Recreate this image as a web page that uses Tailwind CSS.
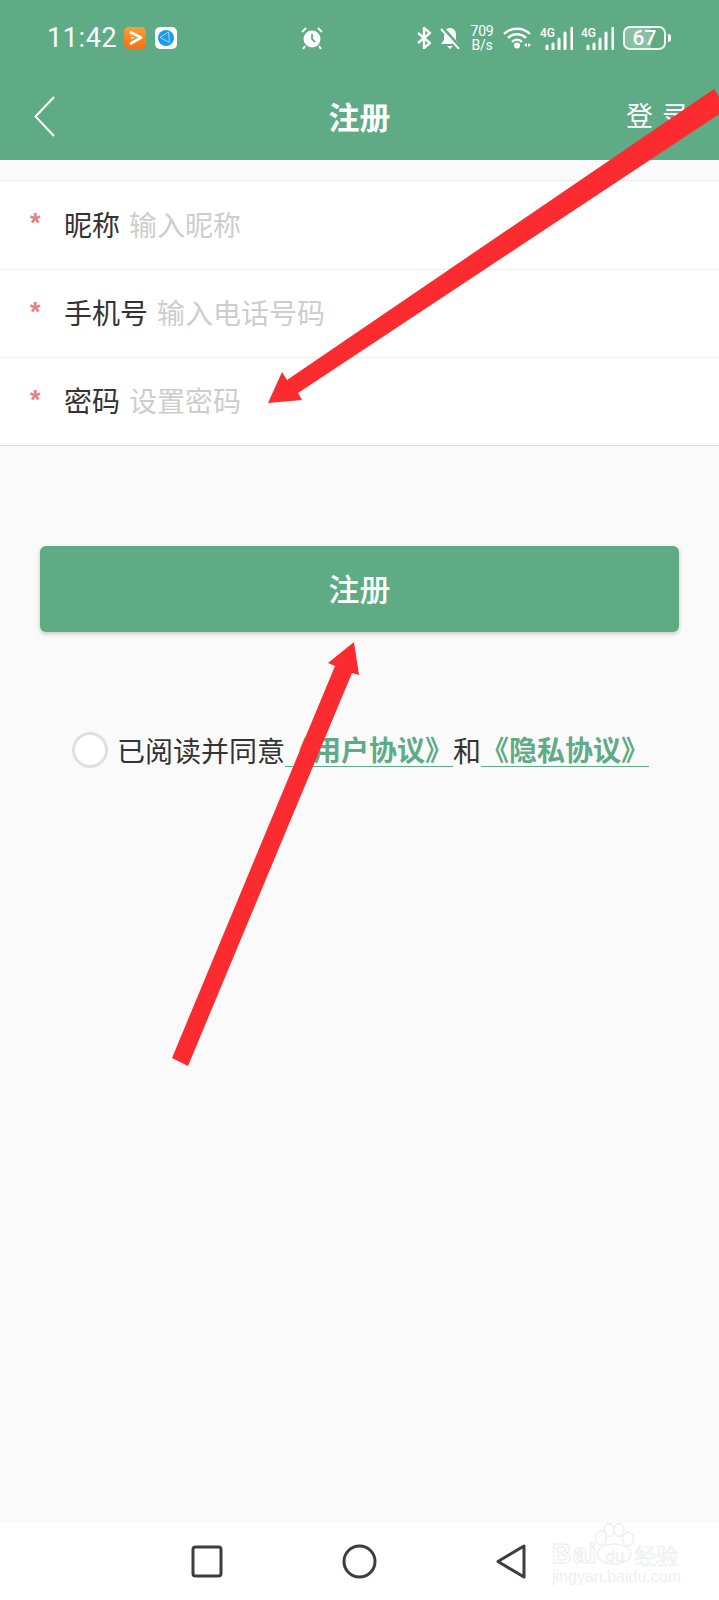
<!DOCTYPE html>
<html lang="zh-CN">
<head>
  <meta charset="UTF-8" />
  <meta name="viewport" content="width=device-width, initial-scale=1.0" />
  <title>注册</title>
  <script src="https://cdn.jsdelivr.net/npm/@tailwindcss/browser@4"></script>
</head>
<body class="bg-[#fafafa] font-['Noto_Sans_CJK_SC','Noto_Sans',sans-serif]">
  <div class="relative w-[719px] h-[1600px] overflow-hidden flex flex-col">

    <!-- header -->
    <header class="h-[160px] bg-[#5fab86] text-white flex flex-col shrink-0">
      <div class="h-[76px] pl-[47px] flex items-center font-['Roboto',sans-serif]">
        <span class="w-[72px] text-[27px] leading-none tracking-[0.6px]">11:42</span>
        <svg class="ml-[5px]" width="22" height="22" viewBox="0 0 22 22">
          <defs>
            <linearGradient id="orange" x1="0" y1="0" x2="0" y2="1">
              <stop offset="0" stop-color="#f7a035" />
              <stop offset="1" stop-color="#f4700f" />
            </linearGradient>
          </defs>
          <rect width="22" height="22" rx="5" fill="url(#orange)" />
          <path d="M6 5l11 5.500L6 17" fill="none" stroke="#fff" stroke-width="2.800" stroke-linejoin="round" />
          <path d="M7 9.500l4 1.200-4 1.500z" fill="#fff" />
        </svg>
        <svg class="ml-[9px]" width="22" height="22" viewBox="0 0 22 22">
          <rect width="22" height="22" rx="5" fill="#fff" />
          <circle cx="11" cy="11" r="8" fill="#1c9be8" />
          <path d="M5 10.500l8.500-5.500 1 10.500z" fill="none" stroke="#bfe3ff" stroke-width="0.800" />
        </svg>
        <svg class="ml-[123px]" width="24" height="24" viewBox="0 0 24 24">
          <circle cx="12" cy="13" r="8.500" fill="#fff" />
          <path d="M12 8v5l3 3" fill="none" stroke="#5fab86" stroke-width="1.800" />
          <path d="M2 6l4-4M22 6l-4-4M5 20l-2 3M19 20l2 3" stroke="#fff" stroke-width="2" />
        </svg>
        <svg class="ml-[93px]" width="14" height="22" viewBox="0 0 14 22">
          <path d="M1 6l12 10-6 5V1l6 5L1 16" fill="none" stroke="#fff" stroke-width="2.400" />
        </svg>
        <svg class="ml-[9px]" width="20" height="22" viewBox="0 0 20 22">
          <path d="M10 1c4 0 6 3 6 7v5l3 4H1l3-4V8c0-4 2-7 6-7z" fill="#fff" />
          <path d="M7 19h6l-3 3z" fill="#fff" />
          <path d="M1 0l18 20" stroke="#5fab86" stroke-width="4.500" />
          <path d="M1 2l18 20" stroke="#fff" stroke-width="2" />
        </svg>
        <div class="ml-[10px] w-[24px] text-[14px] leading-[14px] text-center tracking-[-0.2px]">709<br />B/s</div>
        <svg class="ml-[9px]" width="29" height="22" viewBox="0 0 29 22">
          <path d="M1 7c7-7 19-7 26 0M5 11c5-5 13-5 18 0M9 15c3-3 7-3 10 0" fill="none" stroke="#fff" stroke-width="2.400" />
          <circle cx="14" cy="18.500" r="3" fill="#fff" />
          <path d="M21 18l3-2v4zM28 18l-3-2v4z" fill="#fff" />
        </svg>
        <div class="ml-[8px] w-[33px] h-[23px] relative">
          <span class="absolute left-0 top-0 text-[12px] leading-none font-medium">4G</span>
          <svg class="absolute left-0 top-0" width="33" height="23" viewBox="0 0 33 23">
            <path d="M7 19v3M13 17v5M19 12v10M25 6v16M32 1v21" stroke="#fff" stroke-width="3" stroke-linecap="round" />
          </svg>
        </div>
        <div class="ml-[8px] w-[33px] h-[23px] relative">
          <span class="absolute left-0 top-0 text-[12px] leading-none font-medium">4G</span>
          <svg class="absolute left-0 top-0" width="33" height="23" viewBox="0 0 33 23">
            <path d="M7 19v3M13 17v5M19 12v10M25 6v16M32 1v21" stroke="#fff" stroke-width="3" stroke-linecap="round" />
          </svg>
        </div>
        <div class="ml-[9px] relative w-[43px] h-[24px] rounded-[7px] border-2 border-white/90 flex items-center justify-center overflow-hidden">
          <div class="absolute left-0 top-0 bottom-0 w-[67%] bg-white/25"></div>
          <span class="relative text-[21px] leading-none font-medium">67</span>
        </div>
        <div class="ml-[2px] w-[3px] h-[8px] rounded-r bg-white"></div>
      </div>
      <div class="relative flex-1 flex items-center justify-center">
        <svg class="absolute left-[34px] top-[20px]" width="21" height="41" viewBox="0 0 21 41">
          <path d="M20 1L1.500 20.500 20 40" fill="none" stroke="#fff" stroke-width="2" />
        </svg>
        <h1 class="text-[31px] leading-none font-bold relative top-[-3px]">注册</h1>
        <span class="absolute left-[626px] top-[25px] text-[27px] leading-none tracking-[9px] whitespace-nowrap">登录</span>
      </div>
    </header>

    <!-- main -->
    <main class="flex-1 flex flex-col pt-[20px]">
      <section class="bg-white border-t border-b border-t-[#ebebeb] border-b-[#dcdcdc] text-[28px] leading-none">
        <div class="h-[88.500px] pl-[30px] pb-[2px] flex items-center border-b border-[#efefef]">
          <span class="w-[34px] text-[#e58080] text-[27px] leading-none font-bold font-['Liberation_Sans',sans-serif]">*</span>
          <span class="text-[#333]">昵称</span>
          <span class="ml-[9px] text-[#cdcdcd]">输入昵称</span>
        </div>
        <div class="h-[88.500px] pl-[30px] pb-[2px] flex items-center border-b border-[#efefef]">
          <span class="w-[34px] text-[#e58080] text-[27px] leading-none font-bold font-['Liberation_Sans',sans-serif]">*</span>
          <span class="text-[#333]">手机号</span>
          <span class="ml-[9px] text-[#cdcdcd]">输入电话号码</span>
        </div>
        <div class="h-[86.500px] pl-[30px] pb-[2px] flex items-center">
          <span class="w-[34px] text-[#e58080] text-[27px] leading-none font-bold font-['Liberation_Sans',sans-serif]">*</span>
          <span class="text-[#333]">密码</span>
          <span class="ml-[9px] text-[#cdcdcd]">设置密码</span>
        </div>
      </section>

      <button class="mt-[100px] mx-[40px] h-[86px] rounded-[6px] bg-[#5fab86] text-white text-[31px] font-medium shadow-[0_2px_5px_rgba(0,0,0,0.2)]">注册</button>

      <div class="mt-[93px] pl-[72px] h-[50px] flex items-center text-[28px] leading-none text-[#333]">
        <span class="w-[36px] h-[36px] rounded-full border-[3.500px] border-[#e0e0e0] bg-white"></span>
        <span class="ml-[9px]">已阅读并同意</span>
        <a class="h-[35px] flex items-center border-b border-[#5fab86] text-[#5fab86] font-bold">《用户协议》</a>
        <span>和</span>
        <a class="h-[35px] flex items-center border-b border-[#5fab86] text-[#5fab86] font-bold">《隐私协议》</a>
      </div>
    </main>

    <!-- android nav -->
    <nav class="relative h-[77px] bg-white shrink-0">
      <svg class="absolute left-0 top-0" width="719" height="77" viewBox="0 1523 719 77">
        <rect x="193" y="1547" width="28" height="29" rx="2.500" fill="none" stroke="#3d3d3d" stroke-width="3" />
        <circle cx="359.500" cy="1561.500" r="15.500" fill="none" stroke="#3d3d3d" stroke-width="3" />
        <path d="M524 1546v31l-26-15.500z" fill="none" stroke="#3d3d3d" stroke-width="3" stroke-linejoin="round" />
      </svg>
      <!-- baidu watermark -->
      <svg class="absolute left-[592px] top-[0px]" width="44" height="42" viewBox="0 0 44 42" fill="white" stroke="#eeeeee" stroke-width="1.300">
        <ellipse cx="9" cy="15" rx="5.500" ry="7" />
        <ellipse cx="17" cy="7" rx="5" ry="6.500" />
        <ellipse cx="27" cy="7" rx="5" ry="6.500" />
        <ellipse cx="36" cy="16" rx="5.500" ry="7" />
        <ellipse cx="22" cy="31" rx="17" ry="10" />
      </svg>
      <div class="absolute left-[552px] top-[20px] flex items-center h-[22px] leading-none font-['Liberation_Sans',sans-serif] text-white [-webkit-text-stroke:1px_#ebebeb]">
        <span class="w-[44px] text-[27px] font-bold tracking-[1px]">Bai</span>
        <span class="w-[38px] text-center text-[17px] mt-[5px] [-webkit-text-stroke:0.700px_#ebebeb]">du</span>
        <span class="w-[46px] text-[22px] font-['Noto_Sans_CJK_SC',sans-serif] [-webkit-text-stroke:0.700px_#ebebeb]">经验</span>
      </div>
      <div class="absolute left-[552px] top-[46px] w-[130px] text-[16px] leading-none whitespace-nowrap text-[#efefef] font-['Liberation_Sans',sans-serif]">jingyan.baidu.com</div>
    </nav>

    <!-- red annotation arrows -->
    <svg class="absolute inset-0 pointer-events-none" width="719" height="1600" viewBox="0 0 719 1600">
      <path d="M268 403L282 372 287 380 714 89 727 109 298 393 302 400z" fill="#fb2b30" />
      <path d="M354 642L328 663 335 666 172 1058 188 1066 352 673 359 675z" fill="#fb2b30" />
    </svg>
  </div>
</body>
</html>
